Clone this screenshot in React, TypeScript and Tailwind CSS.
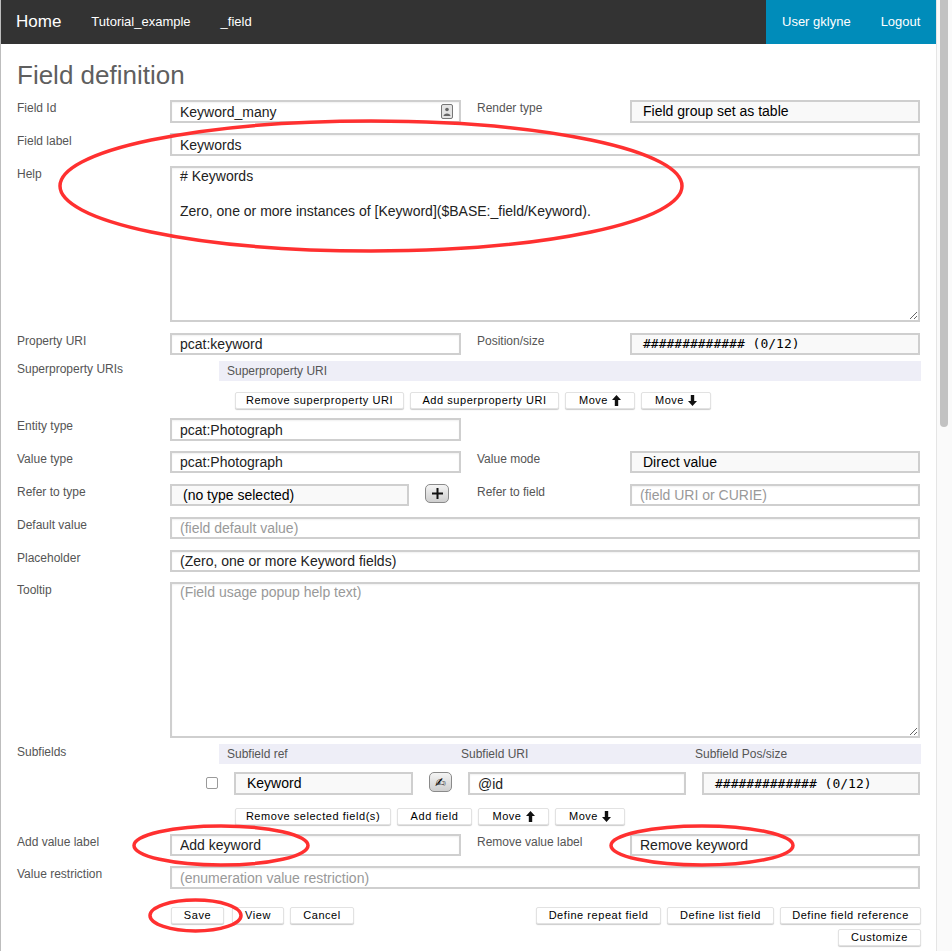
import React from "react";

const inputBase =
  "block h-full w-full min-w-0 border-2 border-[#cfcfcf] px-[8px] text-[14px] text-[#222] outline-none shadow-[inset_0_1px_2px_rgba(0,0,0,0.06)] placeholder:text-[#999]";

function Field({ value, placeholder, className }: { value?: string; placeholder?: string; className: string }) {
  return (
    <div className={className}>
      <input readOnly value={value ?? ""} placeholder={placeholder} className={inputBase + " bg-white"} />
    </div>
  );
}

function Choice({ value, className, mono }: { value: string; className: string; mono?: boolean }) {
  return (
    <div className={className}>
      <div
        className={
          "flex h-full w-full items-center border-2 border-[#cfcfcf] bg-[#f9f9f9] pl-[11px] text-black " +
          (mono ? "font-['DejaVu_Sans_Mono',monospace] text-[13px]" : "text-[14px]")
        }
      >
        {value}
      </div>
    </div>
  );
}

function Label({ children, className }: { children: React.ReactNode; className: string }) {
  return <div className={"text-[12px] leading-[16px] text-[#555] " + className}>{children}</div>;
}

function Btn({ children, className }: { children: React.ReactNode; className: string }) {
  return (
    <button
      className={
        "flex h-[17px] shrink-0 items-center justify-center rounded-[2px] border border-[#e2e2e2] bg-white text-[11px] tracking-[0.55px] text-black shadow-[0_1px_1px_rgba(0,0,0,0.2)] " +
        className
      }
    >
      {children}
    </button>
  );
}

function Arrow({ up }: { up?: boolean }) {
  return (
    <svg width="9" height="11" viewBox="0 0 9 11" className="ml-[4px]">
      <path d={up ? "M4.5 0 L9 5 H6.2 V11 H2.8 V5 H0 Z" : "M4.5 11 L9 6 H6.2 V0 H2.8 V6 H0 Z"} fill="#111" />
    </svg>
  );
}

function Row({ className, children }: { className: string; children: React.ReactNode }) {
  return <div className={"flex w-[904px] " + className}>{children}</div>;
}

function Ring({ x, y, w, h }: { x: number; y: number; w: number; h: number }) {
  return (
    <ellipse cx={x + w / 2} cy={y + h / 2} rx={w / 2 - 2} ry={h / 2 - 2} fill="none" stroke="#ff3030" strokeWidth="3.5" />
  );
}

export default function App() {
  return (
    <div className="relative flex h-[951px] w-[952px] overflow-hidden bg-white font-['Liberation_Sans',Arial,sans-serif]">
      <main className="h-full w-[936px] shrink-0 border-l border-[#bdbdbd]">
        <header className="flex h-[44px] items-center justify-between bg-[#333333] text-white">
          <nav className="flex items-center pb-[1px]">
            <a className="ml-[15px] text-[17px]">Home</a>
            <a className="ml-[30px] text-[13px]">Tutorial_example</a>
            <a className="ml-[30px] text-[13px]">_field</a>
          </nav>
          <nav className="flex h-full w-[170px] items-center bg-[#008cba] pb-[1px] text-[13px]">
            <a className="ml-[16px]">User gklyne</a>
            <a className="ml-[30px]">Logout</a>
          </nav>
        </header>

        <div className="pl-[16px]">
          <h1 className="flex h-[56px] items-center pt-[6px] text-[26px] leading-none text-[#5f5f5f]">Field definition</h1>

          <Row className="h-[23px]">
            <Label className="w-[153px]">Field Id</Label>
            <div className="relative h-full w-[291px]">
              <input readOnly value="Keyword_many" className={inputBase + " bg-white"} />
              <svg width="12" height="15" viewBox="0 0 12 15" className="absolute right-[8px] top-[4px]">
                <rect x="0.5" y="0.5" width="11" height="14" rx="1.5" fill="#e4e4e4" stroke="#777" />
                <circle cx="6" cy="5.5" r="1.8" fill="#666" />
                <path d="M2.5 12 C2.5 8.5 9.5 8.5 9.5 12 Z" fill="#666" />
              </svg>
            </div>
            <Label className="ml-[16px] w-[153px]">Render type</Label>
            <Choice value="Field group set as table" className="h-full w-[290px]" />
          </Row>

          <Row className="mt-[10px] h-[23px]">
            <Label className="w-[153px]">Field label</Label>
            <Field value="Keywords" className="h-full w-[750px]" />
          </Row>

          <Row className="mt-[10px] h-[156px]">
            <Label className="w-[153px]">Help</Label>
            <textarea
              readOnly
              value={"# Keywords\n\nZero, one or more instances of [Keyword]($BASE:_field/Keyword)."}
              className="block h-full w-[750px] resize-y border-2 border-[#cfcfcf] bg-white px-[8px] py-0 text-[14px] leading-[17.5px] text-[#222] outline-none shadow-[inset_0_1px_2px_rgba(0,0,0,0.06)]"
            />
          </Row>

          <Row className="mt-[11px] h-[22px]">
            <Label className="w-[153px]">Property URI</Label>
            <Field value="pcat:keyword" className="h-full w-[291px]" />
            <Label className="ml-[16px] w-[153px]">Position/size</Label>
            <Choice mono value="############# (0/12)" className="h-full w-[290px]" />
          </Row>

          <Row className="mt-[6px] h-[20px]">
            <Label className="w-[209px]">Superproperty URIs</Label>
            <div className="flex h-full w-[702px] shrink-0 items-center bg-[#eeeef7] pl-[8px] text-[12px] text-[#555]">Superproperty URI</div>
          </Row>

          <Row className="mt-[11px] gap-[6px] pl-[218px]">
            <Btn className="w-[169px]">Remove superproperty URI</Btn>
            <Btn className="w-[149px]">Add superproperty URI</Btn>
            <Btn className="w-[70px]">Move<Arrow up /></Btn>
            <Btn className="w-[70px]">Move<Arrow /></Btn>
          </Row>

          <Row className="mt-[9px] h-[23px]">
            <Label className="w-[153px]">Entity type</Label>
            <Field value="pcat:Photograph" className="h-full w-[291px]" />
          </Row>

          <Row className="mt-[10px] h-[22px]">
            <Label className="w-[153px]">Value type</Label>
            <Field value="pcat:Photograph" className="h-full w-[291px]" />
            <Label className="ml-[16px] w-[153px]">Value mode</Label>
            <Choice value="Direct value" className="h-full w-[290px]" />
          </Row>

          <Row className="mt-[11px] h-[22px]">
            <Label className="w-[153px]">Refer to type</Label>
            <Choice value="(no type selected)" className="h-full w-[239px]" />
            <div className="ml-[16px] flex h-[19px] w-[24px] items-center justify-center rounded-[5px] border border-[#8a8a8a] bg-gradient-to-b from-[#f4f4f4] to-[#cfcfcf]">
              <svg width="13" height="13" viewBox="0 0 13 13">
                <path d="M6.5 1 V12 M1 6.5 H12" stroke="#111" strokeWidth="2" />
              </svg>
            </div>
            <Label className="ml-[28px] w-[153px]">Refer to field</Label>
            <Field placeholder="(field URI or CURIE)" className="h-full w-[290px]" />
          </Row>

          <Row className="mt-[11px] h-[22px]">
            <Label className="w-[153px]">Default value</Label>
            <Field placeholder="(field default value)" className="h-full w-[750px]" />
          </Row>

          <Row className="mt-[11px] h-[22px]">
            <Label className="w-[153px]">Placeholder</Label>
            <Field value="(Zero, one or more Keyword fields)" className="h-full w-[750px]" />
          </Row>

          <Row className="mt-[10px] h-[156px]">
            <Label className="w-[153px]">Tooltip</Label>
            <textarea
              readOnly
              placeholder="(Field usage popup help text)"
              className="block h-full w-[750px] resize-y border-2 border-[#cfcfcf] bg-white px-[8px] py-0 text-[14px] leading-[17.5px] outline-none shadow-[inset_0_1px_2px_rgba(0,0,0,0.06)] placeholder:text-[#999]"
            />
          </Row>

          <Row className="mt-[6px] h-[20px]">
            <Label className="w-[209px]">Subfields</Label>
            <div className="flex h-full w-[702px] shrink-0 items-center bg-[#eeeef7] text-[12px] text-[#555]">
              <span className="ml-[8px] w-[234px]">Subfield ref</span>
              <span className="w-[234px]">Subfield URI</span>
              <span>Subfield Pos/size</span>
            </div>
          </Row>

          <Row className="mt-[8px] h-[23px]">
            <div className="ml-[189px] mt-[5px] h-[12px] w-[12px] rounded-[2px] border border-[#9a9a9a] bg-white" />
            <Choice value="Keyword" className="ml-[16px] h-full w-[179px]" />
            <div className="ml-[16px] flex h-[20px] w-[23px] items-center justify-center rounded-[5px] border border-[#8a8a8a] bg-gradient-to-b from-[#f4f4f4] to-[#cfcfcf] font-['DejaVu_Sans',sans-serif] text-[13px] leading-none text-black">
              ✍
            </div>
            <Field value="@id" className="ml-[16px] h-full w-[218px]" />
            <Choice mono value="############# (0/12)" className="ml-[16px] h-full w-[218px]" />
          </Row>

          <Row className="mt-[13px] gap-[6px] pl-[218px]">
            <Btn className="w-[156px]">Remove selected field(s)</Btn>
            <Btn className="w-[75px]">Add field</Btn>
            <Btn className="w-[71px]">Move<Arrow up /></Btn>
            <Btn className="w-[70px]">Move<Arrow /></Btn>
          </Row>

          <Row className="mt-[9px] h-[22px]">
            <Label className="w-[153px]">Add value label</Label>
            <Field value="Add keyword" className="h-full w-[291px]" />
            <Label className="ml-[16px] w-[153px]">Remove value label</Label>
            <Field value="Remove keyword" className="h-full w-[290px]" />
          </Row>

          <Row className="mt-[10px] h-[23px]">
            <Label className="w-[153px]">Value restriction</Label>
            <Field placeholder="(enumeration value restriction)" className="h-full w-[750px]" />
          </Row>

          <Row className="mt-[18px] justify-between pl-[154px]">
            <div className="flex gap-[6px]">
              <Btn className="w-[53px]">Save</Btn>
              <Btn className="ml-[2px] w-[52px]">View</Btn>
              <Btn className="w-[64px]">Cancel</Btn>
            </div>
            <div className="flex flex-col items-end">
              <div className="flex gap-[6px]">
                <Btn className="w-[125px]">Define repeat field</Btn>
                <Btn className="w-[107px]">Define list field</Btn>
                <Btn className="w-[141px]">Define field reference</Btn>
              </div>
              <Btn className="mt-[5px] w-[83px]">Customize</Btn>
            </div>
          </Row>
        </div>
      </main>

      <aside className="h-full w-[16px] shrink-0 border-l border-[#e5e5e5] bg-[#fafafa] pl-[3px] pt-0">
        <div className="h-[427px] w-[8px] rounded-b-[4px] bg-[#c2c2c2]" />
      </aside>

      <svg width="952" height="951" className="pointer-events-none absolute left-0 top-0">
        <Ring x={58} y={119} w={626} h={134} />
        <Ring x={132} y={824} w={178} h={43} />
        <Ring x={609} y={824} w={186} h={43} />
        <Ring x={148} y={898} w={95} h={35} />
      </svg>
    </div>
  );
}
